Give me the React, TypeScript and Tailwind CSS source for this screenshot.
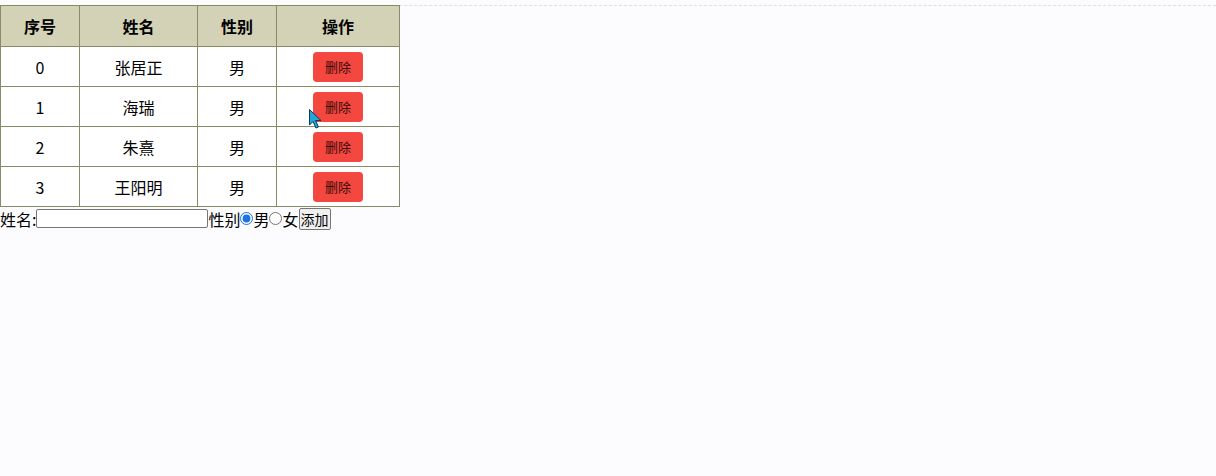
import { useState } from 'react';

type Person = { id: number; name: string; sex: string };

const initial: Person[] = [
  { id: 0, name: '张居正', sex: '男' },
  { id: 1, name: '海瑞', sex: '男' },
  { id: 2, name: '朱熹', sex: '男' },
  { id: 3, name: '王阳明', sex: '男' },
];

const cell = 'border border-[#8a8a66] text-center align-middle p-0';

export default function App() {
  const [list, setList] = useState(initial);
  const [name, setName] = useState('');
  const [sex, setSex] = useState('男');

  const add = () => {
    if (!name) return;
    setList([...list, { id: list.length, name, sex }]);
    setName('');
  };

  return (
    <div
      className="relative min-h-[476px] bg-[#fcfcfe] pt-[5px] text-[16px] text-black"
      style={{ fontFamily: '"Microsoft YaHei", "Noto Sans CJK SC", sans-serif' }}
    >
      {/* faint dashed line across the top */}
      <div className="absolute left-0 right-0 top-[5px] border-t border-dashed border-[#dcdcec]" />

      <table className="relative border-collapse w-[400px] table-fixed">
        <colgroup>
          <col className="w-[79px]" />
          <col className="w-[118px]" />
          <col className="w-[79px]" />
          <col />
        </colgroup>
        <thead>
          <tr className="h-[41px] bg-[#d3d1b6]">
            <th className={cell + ' font-bold'}>序号</th>
            <th className={cell + ' font-bold'}>姓名</th>
            <th className={cell + ' font-bold'}>性别</th>
            <th className={cell + ' font-bold'}>操作</th>
          </tr>
        </thead>
        <tbody>
          {list.map((p, i) => (
            <tr key={p.id} className="h-[40px] bg-white">
              <td className={cell}>{i}</td>
              <td className={cell}>{p.name}</td>
              <td className={cell}>{p.sex}</td>
              <td className={cell}>
                <button
                  onClick={() => setList(list.filter((x) => x.id !== p.id))}
                  className="h-[30px] w-[50px] rounded-[4px] bg-[#f4473f] text-[13px] leading-none text-[#3a0a08]"
                >
                  删除
                </button>
              </td>
            </tr>
          ))}
        </tbody>
      </table>

      <div className="flex items-center h-[23px] leading-none">
        <span>姓名:</span>
        <input
          value={name}
          onChange={(e) => setName(e.target.value)}
          className="h-[19px] w-[172px] border border-[#767676] rounded-[2px] bg-white px-1 text-[13px] outline-none"
        />
        <span>性别</span>
        <input
          type="radio"
          name="sex"
          checked={sex === '男'}
          onChange={() => setSex('男')}
          className="m-0 h-[13px] w-[13px] accent-[#1a73e8]"
        />
        <span>男</span>
        <input
          type="radio"
          name="sex"
          checked={sex === '女'}
          onChange={() => setSex('女')}
          className="m-0 h-[13px] w-[13px]"
        />
        <span>女</span>
        <button
          onClick={add}
          className="h-[22px] w-[32px] border border-[#767676] rounded-[2px] bg-[#efefef] p-0 text-[14px] leading-none"
        >
          添加
        </button>
      </div>

      {/* mouse pointer captured in the screenshot */}
      <svg className="absolute left-[309px] top-[109px]" width="13" height="20" viewBox="0 0 13 20">
        <path d="M0.5 0.5 L0.5 16 L4 12.5 L7 19 L9.5 18 L6.5 11.5 L12 11.5 Z" fill="#22a6d8" stroke="#0a3a5a" strokeWidth="1" />
      </svg>
    </div>
  );
}
